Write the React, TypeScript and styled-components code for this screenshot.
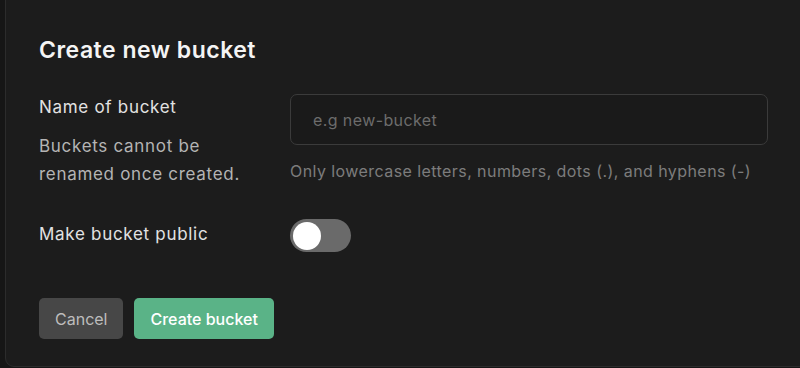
import React from "react";
import styled, { createGlobalStyle } from "styled-components";

const Global = createGlobalStyle`
  html, body {
    margin: 0;
    padding: 0;
    background: #161616;
    overflow: hidden;
  }
  * { box-sizing: border-box; }
`;

const Page = styled.div`
  display: flex;
  align-items: flex-start;
  width: 800px;
  height: 368px;
  padding-left: 5px;
  overflow: hidden;
  font-family: Inter, "Liberation Sans", sans-serif;
`;

const Panel = styled.div`
  flex-shrink: 0;
  width: 820px;
  height: 377px;
  margin-top: -10px;
  padding: 44px 33px 0 33px;
  background: #1c1c1c;
  border: 1px solid #2c2c2c;
  border-radius: 9px;
`;

const Title = styled.h2`
  margin: 0;
  font-size: 23px;
  line-height: 30px;
  font-weight: 600;
  color: #f4f4f4;
  letter-spacing: 0.5px;
`;

const Form = styled.div`
  display: grid;
  grid-template-columns: 251px 478px;
  align-items: start;
  row-gap: 31px;
  margin-top: 30px;
`;

const LabelCol = styled.div`
  display: flex;
  flex-direction: column;
`;

const Label = styled.div`
  font-size: 17px;
  line-height: 24px;
  color: #e2e2e2;
  letter-spacing: 0.7px;
`;

const Description = styled.div`
  margin-top: 13px;
  font-size: 17px;
  line-height: 28px;
  color: #b4b4b4;
  letter-spacing: 0.7px;
`;

const FieldCol = styled.div`
  display: flex;
  flex-direction: column;
`;

const Input = styled.input`
  height: 51px;
  width: 100%;
  margin-top: -1px;
  padding: 0 22px;
  background: #1a1a1a;
  border: 1px solid #3b3b3b;
  border-radius: 7px;
  font-family: inherit;
  font-size: 16px;
  letter-spacing: 0.4px;
  color: #ddd;
  outline: none;
  &::placeholder { color: #6c6c6c; }
`;

const Helper = styled.div`
  margin-top: 16px;
  font-size: 16px;
  line-height: 20px;
  letter-spacing: 0.43px;
  color: #7c7c7c;
`;

const Cell = styled.div<{ $offset?: number }>`
  display: flex;
  align-items: flex-start;
  padding-top: ${(p) => p.$offset ?? 0}px;
`;

const Toggle = styled.div<{ $on?: boolean }>`
  width: 61px;
  height: 33px;
  border-radius: 17px;
  background: ${(p) => (p.$on ? "#5ab387" : "#6a6a6a")};
  padding: 2.5px 3px;
  display: flex;
  justify-content: ${(p) => (p.$on ? "flex-end" : "flex-start")};
`;

const Knob = styled.div`
  width: 28px;
  height: 28px;
  border-radius: 50%;
  background: #ffffff;
`;

const Actions = styled.div`
  display: flex;
  gap: 11px;
  margin-top: 46px;
`;

const Button = styled.button<{ $primary?: boolean }>`
  height: 41px;
  padding: 0 16px;
  border: none;
  border-radius: 5px;
  font-family: inherit;
  font-size: 16px;
  font-weight: ${(p) => (p.$primary ? 500 : 400)};
  background: ${(p) => (p.$primary ? "#5ab387" : "#474747")};
  color: ${(p) => (p.$primary ? "#ffffff" : "#bdbdbd")};
`;

export default function App() {
  return (
    <>
      <Global />
      <Page>
        <Panel>
          <Title>Create new bucket</Title>
          <Form>
            <LabelCol>
              <Label>Name of bucket</Label>
              <Description>
                Buckets cannot be
                <br />
                renamed once created.
              </Description>
            </LabelCol>
            <FieldCol>
              <Input placeholder="e.g new-bucket" />
              <Helper>Only lowercase letters, numbers, dots (.), and hyphens (-)</Helper>
            </FieldCol>
            <Cell $offset={3}>
              <Label>Make bucket public</Label>
            </Cell>
            <Cell>
              <Toggle>
                <Knob />
              </Toggle>
            </Cell>
          </Form>
          <Actions>
            <Button>Cancel</Button>
            <Button $primary>Create bucket</Button>
          </Actions>
        </Panel>
      </Page>
    </>
  );
}
